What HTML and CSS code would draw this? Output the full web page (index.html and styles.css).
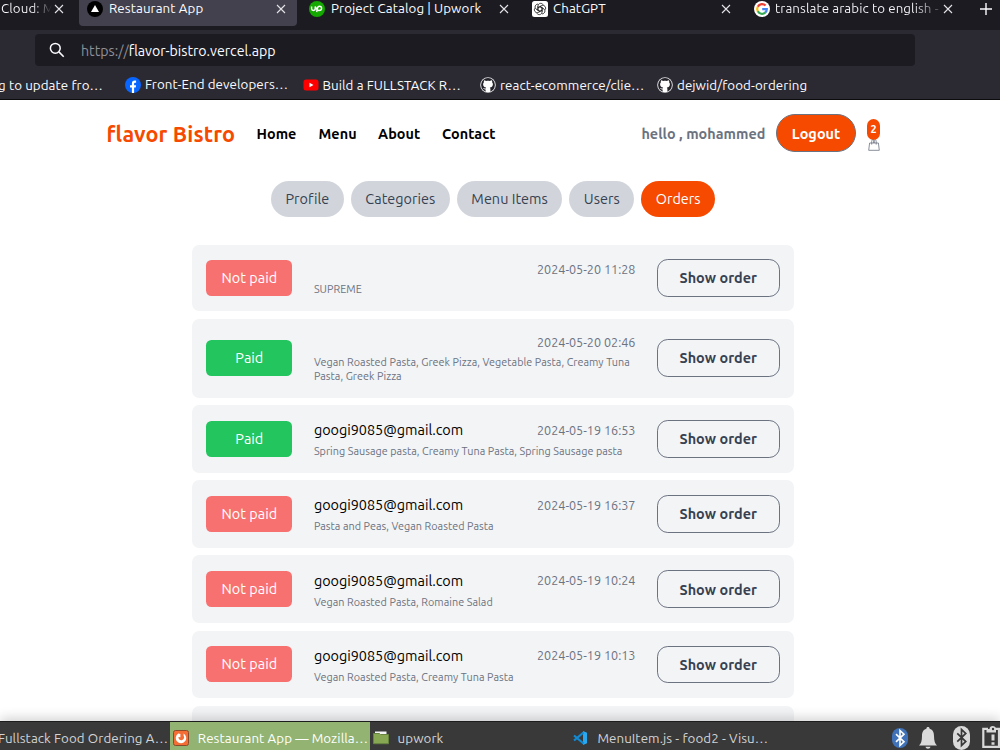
FILE: index.html
```html
<!DOCTYPE html>
<html lang="en">
<head>
<meta charset="utf-8">
<title>Restaurant App</title>
<link rel="stylesheet" href="styles.css">
</head>
<body>
<svg class="defs" width="0" height="0">
  <symbol id="close" viewBox="0 0 10 10"><path d="M1 1l8 8M9 1l-8 8" stroke="#e4e4e8" stroke-width="1.1" fill="none"/></symbol>
  <symbol id="github" viewBox="0 0 16 16"><circle cx="8" cy="8" r="7.8" fill="#e4e4e6"/><circle cx="8" cy="8" r="6.900" fill="#24232b"/><path d="M5.600 15v-2.500c-1.600.2-2-.8-2.500-1.500.9 0 1.500 1 2.500.6.1-.5.3-.9.6-1.100C4 10.200 3.100 9 3.100 7.200c0-.8.2-1.400.8-2-.2-.8-.1-1.400.1-2 .8 0 1.500.400 2.100.8 1.200-.3 2.600-.3 3.800 0 .6-.4 1.300-.8 2.100-.8.3.6.300 1.200.1 2 .6.6.8 1.200.8 2 0 1.800-1 3-3.100 3.300.4.4.6.9.6 1.600V15z" fill="#fff"/></symbol>
  <symbol id="bt" viewBox="0 0 16 20"><path d="M4 6.200l8 7.600-4 3.700v-15l4 3.700-8 7.600" fill="none" stroke="currentColor" stroke-width="1.600"/></symbol>
</svg>

<div class="tabs">
  <div class="tab tab-cloud"><span class="fade">Cloud: M</span><svg class="x"><use href="#close"/></svg></div>
  <div class="tab tab-active">
    <svg class="fav" viewBox="0 0 16 16"><circle cx="8" cy="8" r="8" fill="#000"/><path d="M8 4l4 7H4z" fill="#fff"/></svg>
    <span>Restaurant App</span><svg class="x"><use href="#close"/></svg>
  </div>
  <div class="tab tab-upwork">
    <svg class="fav" viewBox="0 0 16 16"><circle cx="8" cy="8" r="8" fill="#14a800"/><path d="M2.600 5.500v2.300c0 2.300 3.600 2.300 3.600 0V5.500c1 2.300 2 4 3.700 4 1.400 0 2.700-.8 2.700-2.200S11.500 5.200 10.300 5.200c-1.800 0-2 1.700-2.600 6" stroke="#fff" stroke-width="1.400" fill="none"/></svg>
    <span>Project Catalog | Upwork</span><svg class="x"><use href="#close"/></svg>
  </div>
  <div class="tab tab-gpt">
    <svg class="fav" viewBox="0 0 16 16"><rect width="16" height="16" rx="2.500" fill="#fff"/><g fill="none" stroke="#222" stroke-width=".8"><path id="petal" d="M6 9.200V5.100c0-3.200 4.200-3.600 5.200-1.200M8 5.600l3.500 2"/><use href="#petal" transform="rotate(60 8 8)"/><use href="#petal" transform="rotate(120 8 8)"/><use href="#petal" transform="rotate(180 8 8)"/><use href="#petal" transform="rotate(240 8 8)"/><use href="#petal" transform="rotate(300 8 8)"/></g></svg>
    <span>ChatGPT</span><svg class="x"><use href="#close"/></svg>
  </div>
  <div class="tab tab-google">
    <svg class="fav" viewBox="0 0 16 16"><circle cx="8" cy="8" r="8" fill="#fff"/><g fill="none" stroke-width="2.200"><path d="M11.600 4.600A4.800 4.800 0 0 0 3.800 5.700" stroke="#ea4335"/><path d="M3.800 5.700a4.800 4.800 0 0 0 0 4.700" stroke="#fbbc05"/><path d="M3.800 10.300a4.800 4.800 0 0 0 7.400 1.300" stroke="#34a853"/><path d="M11.100 11.700A4.700 4.700 0 0 0 12.800 8.200H8.200" stroke="#4285f4"/></g></svg>
    <span class="fade-long">translate arabic to english -</span><svg class="x"><use href="#close"/></svg>
  </div>
  <svg class="plus" viewBox="0 0 12 12"><path d="M6 0v12M0 6h12" stroke="#fbfbfe" stroke-width="1.400"/></svg>
</div>

<div class="toolbar">
  <div class="url">
    <svg class="search" viewBox="0 0 16 16"><circle cx="6.300" cy="6.300" r="4.900" fill="none" stroke="#fbfbfe" stroke-width="1.500"/><path d="M9.900 9.900l4.800 4.800" stroke="#fbfbfe" stroke-width="1.600"/></svg>
    <span><i>https://</i>flavor-bistro.vercel.app</span>
  </div>
</div>

<div class="bookmarks">
  <div class="bm bm-first"><span>g to update fro…</span></div>
  <div class="bm bm-fb"><svg class="fav" viewBox="0 0 16 16"><circle cx="8" cy="8" r="8" fill="#0866ff"/><path d="M6.900 16v-5.400H5V8.200h1.900V6.800c0-2.500 1.200-3.500 4.200-3.100v2.100c-1.600-.1-2 .1-2 1.300v1.100h2l-.4 2.400H9.100V16z" fill="#fff"/></svg><span>Front-End developers…</span></div>
  <div class="bm bm-yt"><svg class="fav" viewBox="0 0 16 16"><rect x=".5" y="2.500" width="15" height="11" rx="2.500" fill="#f00"/><path d="M6.500 5.700l4 2.300-4 2.300z" fill="#fff"/></svg><span>Build a FULLSTACK R…</span></div>
  <div class="bm bm-gh"><svg class="fav"><use href="#github"/></svg><span>react-ecommerce/clie…</span></div>
  <div class="bm bm-gh2"><svg class="fav"><use href="#github"/></svg><span>dejwid/food-ordering</span></div>
</div>

<main class="page">
  <header class="head">
    <nav class="nav"><a class="brand">flavor Bistro</a><a class="home">Home</a><a class="menu">Menu</a><a class="about">About</a><a>Contact</a></nav>
    <div class="account">
      <span class="hello">hello , mohammed</span>
      <button class="logout">Logout</button>
      <div class="cart"><span class="count">2</span><svg viewBox="0 0 12 12"><path d="M1.600 4h8.800l.9 7.300H.7zM3.700 5.600V2.300c0-2 1.900-2 1.900 0V4M6.300 4V2.300c0-2 1.900-2 1.900 0v3.300" fill="none" stroke="#6b7280" stroke-width=".8" stroke-linejoin="round"/></svg></div>
    </div>
  </header>

  <div class="pills"><a>Profile</a><a>Categories</a><a>Menu Items</a><a>Users</a><a class="on">Orders</a></div>

  <section class="orders">
    <article class="order"><span class="badge red">Not paid</span><div class="info"><div class="row"><b></b><time>2024-05-20 11:28</time></div><p>SUPREME</p></div><button class="show">Show order</button></article>
    <article class="order"><span class="badge green">Paid</span><div class="info"><div class="row"><b></b><time>2024-05-20 02:46</time></div><p>Vegan Roasted Pasta, Greek Pizza, Vegetable Pasta, Creamy Tuna<br>Pasta, Greek Pizza</p></div><button class="show">Show order</button></article>
    <article class="order"><span class="badge green">Paid</span><div class="info"><div class="row mail"><b>googi9085@gmail.com</b><time>2024-05-19 16:53</time></div><p>Spring Sausage pasta, Creamy Tuna Pasta, Spring Sausage pasta</p></div><button class="show">Show order</button></article>
    <article class="order"><span class="badge red">Not paid</span><div class="info"><div class="row mail"><b>googi9085@gmail.com</b><time>2024-05-19 16:37</time></div><p>Pasta and Peas, Vegan Roasted Pasta</p></div><button class="show">Show order</button></article>
    <article class="order"><span class="badge red">Not paid</span><div class="info"><div class="row mail"><b>googi9085@gmail.com</b><time>2024-05-19 10:24</time></div><p>Vegan Roasted Pasta, Romaine Salad</p></div><button class="show">Show order</button></article>
    <article class="order"><span class="badge red">Not paid</span><div class="info"><div class="row mail"><b>googi9085@gmail.com</b><time>2024-05-19 10:13</time></div><p>Vegan Roasted Pasta, Creamy Tuna Pasta</p></div><button class="show">Show order</button></article>
    <article class="order next"></article>
  </section>
</main>

<footer class="taskbar">
  <div class="task task-food"><span>Fullstack Food Ordering A…</span></div>
  <div class="task task-app"><svg viewBox="0 0 16 16"><rect x=".5" y=".5" width="15" height="15" rx="2" fill="#f46d35" stroke="#8a4a2a"/><path d="M5.300 3.600A5.200 5.200 0 1 0 10.500 3.500l.2 2.500A2.800 2.800 0 1 1 5.500 7l1.900.2V4.100z" fill="#fff"/></svg><span>Restaurant App — Mozilla…</span></div>
  <div class="task task-folder"><svg viewBox="0 0 16 16"><path d="M2 1.500h11.500V5H2z" fill="#f4f4f4"/><path d="M.5 3.500h6l1 1h8v9.200H.5z" fill="#87a752" stroke="#668340"/></svg><span>upwork</span></div>
  <div class="task task-code"><svg viewBox="0 0 16 16"><path d="M11 1l4 1.800v10.400L11 15z" fill="#29a9f2"/><path d="M11.500 2.500L2 10.500M2 5.500l9.500 8" stroke="#118ad4" stroke-width="2.200" fill="none"/></svg><span>MenuItem.js - food2 - Visu…</span></div>
  <div class="tray">
    <svg class="t-bt" viewBox="0 0 16 20"><rect width="16" height="20" rx="8" fill="#3f72b8"/><use href="#bt" width="16" height="20"/></svg>
    <svg class="t-bell" viewBox="0 0 18 22"><path d="M9 0c1 0 1.600.7 1.600 1.700C14 2.500 15 5.500 15 9c0 5 1 7.500 3 9.500H0C2 16.500 3 14 3 9c0-3.500 1-6.500 4.400-7.300C7.400.7 8 0 9 0zM6.500 19.700h5c-.3 2.600-4.700 2.600-5 0z" fill="#dadada"/></svg>
    <svg class="t-bt2" viewBox="0 0 17 24"><rect width="17" height="24" rx="8.500" fill="#dadada"/><use href="#bt" width="17" height="23"/></svg>
    <svg class="t-clip" viewBox="0 0 18 22"><path d="M6 2.800H1.300v18H17V2.800h-4.700" fill="none" stroke="#dadada" stroke-width="2.200"/><path d="M4.500 3h3C7.500-1 14-1 14 3v3.500H4.500zM9.500 8.500h3v6h-3zM9.500 16.300h3v2.500h-3z" fill="#dadada"/><circle cx="11" cy="3" r="1.200" fill="#393939"/></svg>
  </div>
</footer>
</body>
</html>
```
FILE: styles.css
```css
* { box-sizing: border-box; }
body { margin: 0; width: 1000px; height: 750px; overflow: hidden; display: flex; flex-direction: column; background: #fff; font-family: Ubuntu, "Noto Sans", sans-serif; font-size: 14.4px; letter-spacing: .04px; }
.defs { position: absolute; }
svg { display: block; flex: none; }
a { white-space: nowrap; }

/* browser tabs */
.tabs { display: flex; height: 30px; flex: none; background: #1c1b22; color: #fbfbfe; font-size: 13.33px; letter-spacing: .08px; line-height: 16px; white-space: nowrap; }
.tab { display: flex; align-items: center; height: 26px; padding-bottom: 9px; }
.tab .x { width: 10px; height: 10px; margin-left: auto; }
.fav { width: 16px; height: 16px; }
.tab .fav { margin-right: 6px; }
.tab-cloud { width: 79px; padding-left: 1px; padding-right: 15px; }
.fade { width: 52px; margin-right: -4px; background: linear-gradient(90deg, #fbfbfe 60%, #1c1b22 98%); background-clip: text; color: transparent; }
.tab-active { width: 218px; padding-left: 8px; padding-right: 11px; background: #42414d; border-radius: 0 0 4px 4px; }
.tab-upwork { width: 223px; padding-left: 12px; padding-right: 11px; }
.tab-gpt { width: 222px; padding-left: 12px; padding-right: 11px; }
.tab-gpt .fav { margin-right: 5px; }
.tab-google { width: 212px; padding-left: 12px; padding-right: 1px; }
.tab-google .fav { margin-right: 5px; }
.fade-long { width: 164px; background: linear-gradient(90deg, #fbfbfe 84%, #4b4a51 100%); background-clip: text; color: transparent; }
.plus { width: 12px; height: 12px; margin: 3px 0 0 26px; }

/* address and bookmarks bars */
.toolbar { height: 39px; flex: none; padding: 4px 0 0 35px; background: #2b2a33; }
.url { display: flex; align-items: center; width: 880px; height: 32px; padding-left: 14px; border-radius: 4px; background: #1c1b22; color: #fbfbfe; font-size: 14.2px; letter-spacing: 0; }
.url span { padding-top: 1px; }
.url i { font-style: normal; color: #8f8f96; }
.search { width: 16px; height: 16px; margin-right: 16px; }
.bookmarks { display: flex; height: 31px; flex: none; background: #2b2a33; border-bottom: 1px solid #0c0c0d; color: #fbfbfe; font-size: 13.33px; letter-spacing: .08px; line-height: 16px; white-space: nowrap; }
.bm { display: flex; align-items: center; padding-top: 1px; }
.bm span { padding-top: 2px; }
.bm-first { width: 125px; }
.bm-first span { margin-left: -2px; }
.bm-fb { width: 178px; gap: 4px; }
.bm-fb span { padding-top: 0; }
.bm-yt { width: 177px; gap: 3.5px; }
.bm-gh { width: 177px; gap: 4px; }
.bm-gh2 { gap: 4px; }

/* page */
.page { flex: 1; min-height: 0; overflow: hidden; }
.head { display: flex; justify-content: space-between; align-items: center; height: 66px; padding: 0 120px 0 106.5px; }
.nav { display: flex; align-items: center; padding-top: 1px; font-weight: 700; color: #000; }
.brand { width: 150px; font-size: 21.6px; font-weight: 600; letter-spacing: .12px; color: #f54a00; }
.nav a:not(.brand), .hello { padding-top: 1px; }
.home { width: 62px; }
.menu { width: 59.5px; }
.about { width: 64px; }
.account { display: flex; align-items: center; }
.hello { margin-right: 10.5px; font-weight: 600; color: #6b7280; }
button { font: inherit; font-weight: 600; letter-spacing: inherit; padding: 0; }
.logout { width: 80px; height: 38px; margin-right: 11px; padding-top: 1px; border: 1px solid #6b7280; border-radius: 19px; background: #f54a00; color: #fff; }
.cart { width: 13px; height: 32px; margin-top: 3px; }
.count { display: block; width: 13px; height: 21px; border-radius: 6.5px; background: #f54a00; color: #fff; font-size: 10.8px; font-weight: 600; line-height: 20px; text-align: center; }
.cart svg { width: 12px; height: 12px; margin: -1px 0 0 .5px; }
.pills { display: flex; justify-content: center; gap: 7.2px; margin: 15px 14px 0 0; }
.pills a { height: 36px; padding: 0 14.4px; border-radius: 18px; background: #d1d5db; color: #374151; line-height: 36px; }
.pills .on { background: #f54a00; color: #fff; }
.orders { display: flex; flex-direction: column; gap: 7.2px; width: 602px; margin: 27.9px 0 0 192px; }
.order { display: flex; align-items: center; padding: 14.4px; border-radius: 7.2px; background: #f3f4f6; }
.badge { width: 86px; height: 36px; border-radius: 5.4px; color: #fff; line-height: 36px; text-align: center; }
.red { background: #f87171; }
.green { background: #22c55e; }
.info { width: 322px; margin: 0 21.3px 0 21.6px; color: #6b7280; }
.row { display: flex; justify-content: space-between; align-items: center; height: 18px; }
.mail { height: 21.2px; }
.row b { padding-top: .4px; font-weight: 400; color: #000; letter-spacing: 0; }
.row time { font-size: 12.6px; letter-spacing: 0; }
.mail time { padding-bottom: .8px; }
.info p { margin: 3.6px 0 0; font-size: 10.8px; line-height: 14.4px; white-space: nowrap; }
.show { width: 123px; height: 37.8px; padding-top: .4px; border: 1px solid #6b7280; border-radius: 10.8px; background: transparent; color: #374151; }
.next { height: 68px; }

/* desktop panel */
.taskbar { position: relative; display: flex; flex: none; height: 29px; border-top: 1px solid #1d1d1d; background: #393939; color: #d3d3d3; font-size: 13.33px; letter-spacing: .08px; line-height: 16px; white-space: nowrap; box-shadow: 0 -3px 12px rgba(0,0,0,.18); }
.task { display: flex; align-items: center; padding-top: 4px; }
.task span { padding-top: 2px; }
.task svg { width: 16px; height: 16px; margin-right: 9px; }
.task-food { width: 170px; }
.task-food span { margin-left: -2px; }
.task-app { width: 200px; padding-left: 3px; background: #92b372; color: #fff; }
.task-folder { width: 203px; padding-left: 3px; }
.task-code { width: 320px; }
.tray { display: flex; align-items: flex-start; }
.t-bt { width: 16px; height: 20px; margin-top: 6px; color: #fff; }
.t-bell { width: 18px; height: 22px; margin: 5px 0 0 11px; }
.t-bt2 { width: 17px; height: 24px; margin: 4px 0 0 16px; color: #393939; }
.t-clip { width: 18px; height: 22px; margin: 4px 0 0 12px; }
```
